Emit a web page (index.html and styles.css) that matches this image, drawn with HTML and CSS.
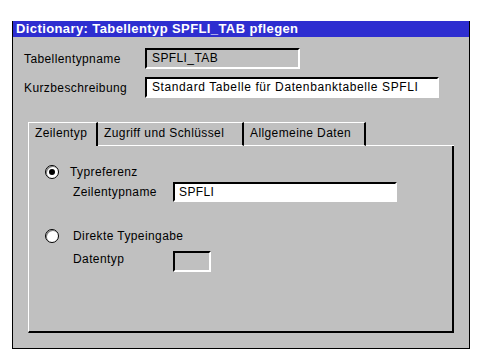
FILE: index.html
```html
<!DOCTYPE html>
<html lang="de">
<head>
<meta charset="utf-8">
<title>Dictionary: Tabellentyp SPFLI_TAB pflegen</title>
<link rel="stylesheet" href="styles.css">
</head>
<body>
<div class="window">
  <div class="titlebar">Dictionary: Tabellentyp SPFLI_TAB pflegen</div>
  <div class="content">
    <div class="form">
      <div class="row">
        <span class="label">Tabellentypname</span>
        <div class="field disabled w-name">SPFLI_TAB</div>
      </div>
      <div class="row">
        <span class="label">Kurzbeschreibung</span>
        <div class="field w-desc">Standard Tabelle für Datenbanktabelle SPFLI</div>
      </div>
    </div>
    <div class="tabview">
      <div class="tabs">
        <div class="tab active t1">Zeilentyp</div>
        <div class="tab t2">Zugriff und Schlüssel</div>
        <div class="tab t3">Allgemeine Daten</div>
        <div class="tab-fill"></div>
      </div>
      <div class="panel">
        <div class="radio-row">
          <span class="radio checked"></span>
          <span class="radio-label">Typreferenz</span>
        </div>
        <div class="sub-row first">
          <span class="sub-label">Zeilentypname</span>
          <div class="field w-row">SPFLI</div>
        </div>
        <div class="radio-row second">
          <span class="radio"></span>
          <span class="radio-label alt">Direkte Typeingabe</span>
        </div>
        <div class="sub-row last">
          <span class="sub-label">Datentyp</span>
          <div class="field disabled w-type"></div>
        </div>
      </div>
    </div>
  </div>
</div>
</body>
</html>
```

FILE: styles.css
```css
html, body {
  margin: 0;
  background: #ffffff;
}
body {
  padding: 21px 0 0 12px;
  font-family: "Liberation Sans", Arial, sans-serif;
  font-size: 12px;
  letter-spacing: 0.4px;
  color: #000;
}
.window {
  width: 456px;
  height: 327px;
  border: 1px solid #000;
  border-top: none;
  background: #c0c0c0;
  display: flex;
  flex-direction: column;
}
.titlebar {
  height: 16px;
  line-height: 16px;
  background: #2e2ed0;
  color: #fff;
  font-weight: bold;
  font-size: 13px;
  letter-spacing: 0.4px;
  padding-left: 3px;
  white-space: nowrap;
  overflow: hidden;
}
.content {
  padding: 11px 0 0 11px;
  display: flex;
  flex-direction: column;
}
.form {
  display: flex;
  flex-direction: column;
  gap: 8px;
}
.row {
  display: flex;
  align-items: center;
  height: 21px;
}
.label {
  width: 121px;
}
.field {
  box-sizing: border-box;
  height: 21px;
  line-height: 17px;
  border-style: solid;
  border-width: 2px;
  border-color: #000 #fff #fff #000;
  background: #fff;
  padding-left: 5px;
  white-space: nowrap;
  overflow: hidden;
}
.field.disabled {
  background: #c0c0c0;
}
.w-name { width: 155px; }
.w-desc { width: 294px; letter-spacing: 0.6px; }
.w-row { width: 224px; height: 20px; line-height: 16px; padding-left: 4px; }
.w-type { width: 38px; }

.tabview {
  margin: 24px 0 0 4px;
  width: 426px;
  display: flex;
  flex-direction: column;
}
.tabs {
  display: flex;
  height: 24px;
}
.tab {
  box-sizing: border-box;
  height: 24px;
  border-top: 1px solid #fff;
  border-bottom: 1px solid #fff;
  border-right: 2px solid #000;
  padding-left: 6px;
  line-height: 21px;
  white-space: nowrap;
}
.tab.active {
  border-left: 1px solid #fff;
  border-bottom: none;
  padding-left: 6px;
}
.t1 { width: 70px; }
.t2 { width: 146px; }
.t3 { width: 122px; }
.tab-fill {
  flex: 1;
  border-bottom: 1px solid #fff;
}
.panel {
  box-sizing: border-box;
  height: 187px;
  border-left: 1px solid #fff;
  border-right: 2px solid #000;
  border-bottom: 2px solid #000;
  padding: 19px 0 0 16px;
  display: flex;
  flex-direction: column;
}
.radio-row {
  display: flex;
  align-items: center;
  height: 14px;
}
.radio-row.second {
  margin-top: 27px;
}
.radio {
  box-sizing: border-box;
  width: 14px;
  height: 14px;
  border-radius: 50%;
  border: 1px solid #000;
  background: #fff;
  display: flex;
  align-items: center;
  justify-content: center;
  box-shadow: inset 1px 1px 0 #808080;
}
.radio.checked::after {
  content: "";
  width: 6px;
  height: 6px;
  border-radius: 50%;
  background: #000;
}
.radio-label {
  margin-left: 11px;
}
.radio-label.alt {
  margin-left: 14px;
}
.sub-row {
  display: flex;
  align-items: center;
  padding-left: 28px;
}
.sub-row.first {
  margin-top: 3px;
}
.sub-row.last {
  margin-top: 8px;
  align-items: flex-start;
}
.sub-row.last .sub-label {
  line-height: 14px;
  padding-top: 1px;
}
.sub-label {
  width: 100px;
}
```
